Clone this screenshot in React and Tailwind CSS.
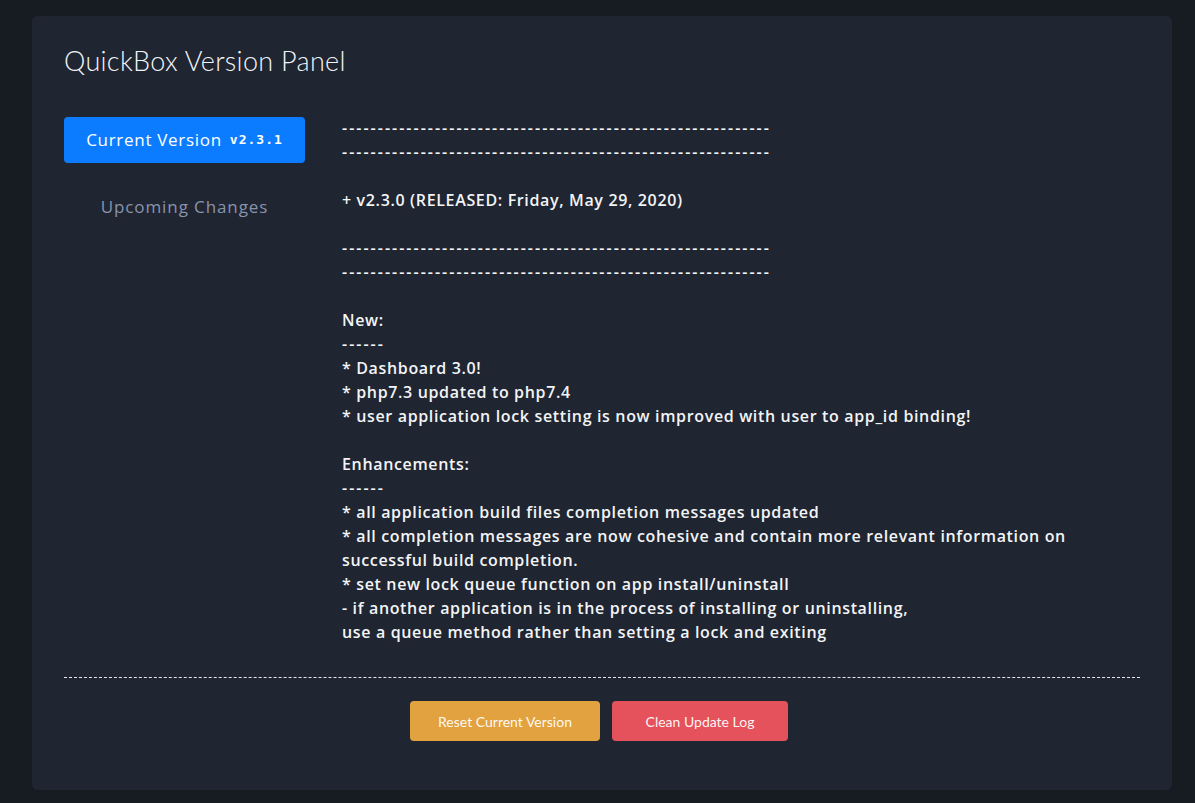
import React from "react";

const dashes = "-".repeat(60);

const lines = [
  dashes,
  dashes,
  "",
  "+ v2.3.0 (RELEASED: Friday, May 29, 2020)",
  "",
  dashes,
  dashes,
  "",
  "New:",
  "------",
  "* Dashboard 3.0!",
  "* php7.3 updated to php7.4",
  "* user application lock setting is now improved with user to app_id binding!",
  "",
  "Enhancements:",
  "------",
  "* all application build files completion messages updated",
  "* all completion messages are now cohesive and contain more relevant information on successful build completion.",
  "* set new lock queue function on app install/uninstall",
  "- if another application is in the process of installing or uninstalling,",
  "use a queue method rather than setting a lock and exiting",
];

export default function App() {
  return (
    <div
      className="min-h-[803px] w-[1195px] bg-[#171c23] pt-4 pb-[13px] pl-8"
      style={{ fontFamily: "Lato, 'Noto Sans', sans-serif" }}
    >
      <div className="w-[1140px] h-[774px] rounded-md bg-[#1f2531] px-8 pt-8 flex flex-col">
        <h1 className="text-[27px] font-light leading-[30px] text-[#f2f4f8] -mt-[2px] tracking-[0.3px]">
          QuickBox Version Panel
        </h1>
        <div className="flex mt-[40px]" style={{ fontFamily: "'Open Sans', sans-serif" }}>
          <div className="w-[241px] flex flex-col shrink-0 pt-[1px]">
            <div className="h-[46px] rounded-[4px] bg-[#0b7cff] flex items-center justify-center text-white">
              <span className="text-[17px] font-medium tracking-[0.7px]">Current Version</span>
              <span
                className="ml-[8px] text-[13px] font-bold tracking-[1px]"
                style={{ fontFamily: "'DejaVu Sans Mono', monospace" }}
              >
                v2.3.1
              </span>
            </div>
            <div className="h-[46px] mt-[21px] flex items-center justify-center text-[17px] font-medium tracking-[0.9px] text-[#8a93ad]">
              Upcoming Changes
            </div>
          </div>
          <div className="ml-[37px] w-[798px] text-[16px] font-semibold leading-6 text-[#f3f4f6] tracking-[0.65px]">
            {lines.map((l, i) =>
              l === "" ? (
                <div key={i} className="h-6" />
              ) : l.startsWith("---") ? (
                <div key={i} className="tracking-[2px]">{l}</div>
              ) : (
                <div key={i}>{l}</div>
              )
            )}
          </div>
        </div>
        <div className="mt-[33px] border-t border-dashed border-[#e5e7eb]" />
        <div className="mt-[23px] flex justify-center gap-3 pr-[6px]">
          <button className="h-10 w-[190px] rounded-[4px] bg-[#e2a23f] text-[14px] text-white/95">
            Reset Current Version
          </button>
          <button className="h-10 w-[176px] rounded-[4px] bg-[#e6525c] text-[14px] text-white/95">
            Clean Update Log
          </button>
        </div>
      </div>
    </div>
  );
}
